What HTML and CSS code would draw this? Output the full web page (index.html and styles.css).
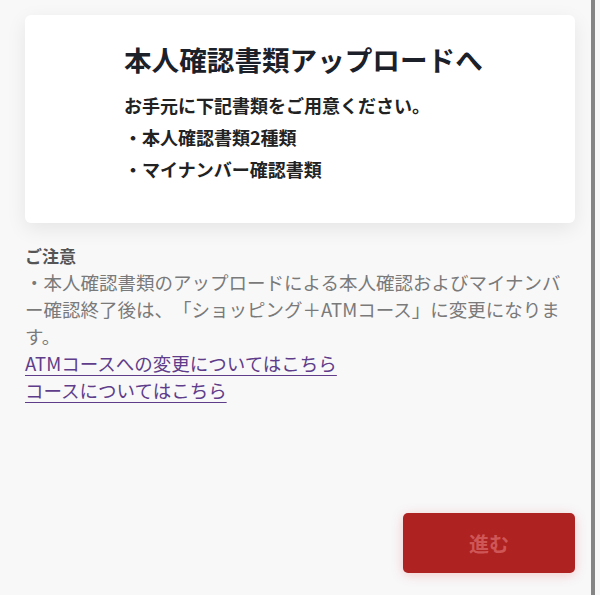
FILE: index.html
```html
<!DOCTYPE html>
<html lang="ja">
<head>
    <meta charset="UTF-8">
    <meta name="viewport" content="width=device-width, initial-scale=1.0">
    <title>本人確認書類アップロード</title>
    <link rel="stylesheet" href="styles.css">
</head>
<body>
    <div class="page">
        <main class="screen">
            <section class="card">
                <h1>本人確認書類アップロードへ</h1>
                <p class="lead">お手元に下記書類をご用意ください。</p>
                <ul class="doc-list">
                    <li>・本人確認書類2種類</li>
                    <li>・マイナンバー確認書類</li>
                </ul>
            </section>

            <section class="notice">
                <h2>ご注意</h2>
                <p>・本人確認書類のアップロードによる本人確認およびマイナンバー確認終了後は、「ショッピング＋ATMコース」に変更になります。</p>
                <a href="#">ATMコースへの変更についてはこちら</a>
                <a href="#">コースについてはこちら</a>
            </section>

            <div class="actions">
                <button class="next-btn" disabled>進む</button>
            </div>
        </main>
        <div class="scrollbar"></div>
    </div>
</body>
</html>
```

FILE: styles.css
```css
body {
    margin: 0;
    font-family: "Noto Sans CJK JP", "Noto Sans", sans-serif;
    background-color: #f8f8f9;
    color: #222;
    text-spacing-trim: space-all; /* keep full-width punctuation */
}
.page {
    display: flex;
    height: 595px;
    overflow: hidden;
}
.screen {
    flex: 1;
    display: flex;
    flex-direction: column;
    padding: 15px 16px 22px 25px;
}
.scrollbar {
    width: 4px;
    margin-right: 5px;
    background-color: #858585;
}

/* upload card */
.card {
    background-color: #fff;
    border-radius: 6px;
    box-shadow: 0 6px 20px rgba(0, 0, 0, 0.08);
    padding: 24px 20px 38px 99px;
}
.card h1 {
    margin: 0 0 10px;
    font-size: 27.6px;
    line-height: 40px;
    font-weight: bold;
    color: #1b2029;
}
.lead {
    margin: 0;
    font-size: 18px;
    line-height: 32px;
    font-weight: bold;
}
.doc-list {
    list-style: none;
    margin: 0;
    padding: 0;
    font-size: 18px;
    line-height: 32px;
    font-weight: bold;
}

/* notes under the card */
.notice {
    margin-top: 19px;
    font-size: 18.5px;
    line-height: 27px;
    color: #7a7a7a;
}
.notice h2 {
    margin: 0;
    font-size: 17px;
    line-height: 27px;
    color: #555;
}
.notice p {
    margin: 0;
}
.notice a {
    display: table;
    color: #5f3d8a;
    text-decoration: underline;
    text-underline-offset: 4px;
}

.actions {
    margin-top: auto;
    display: flex;
    justify-content: flex-end;
}
.next-btn {
    width: 172px;
    height: 60px;
    border: none;
    border-radius: 5px;
    background-color: #ae2222;
    color: #cf5656;
    font-family: inherit;
    font-size: 20px;
    font-weight: bold;
    box-shadow: 0 2px 12px rgba(230, 60, 60, 0.25);
}
```
